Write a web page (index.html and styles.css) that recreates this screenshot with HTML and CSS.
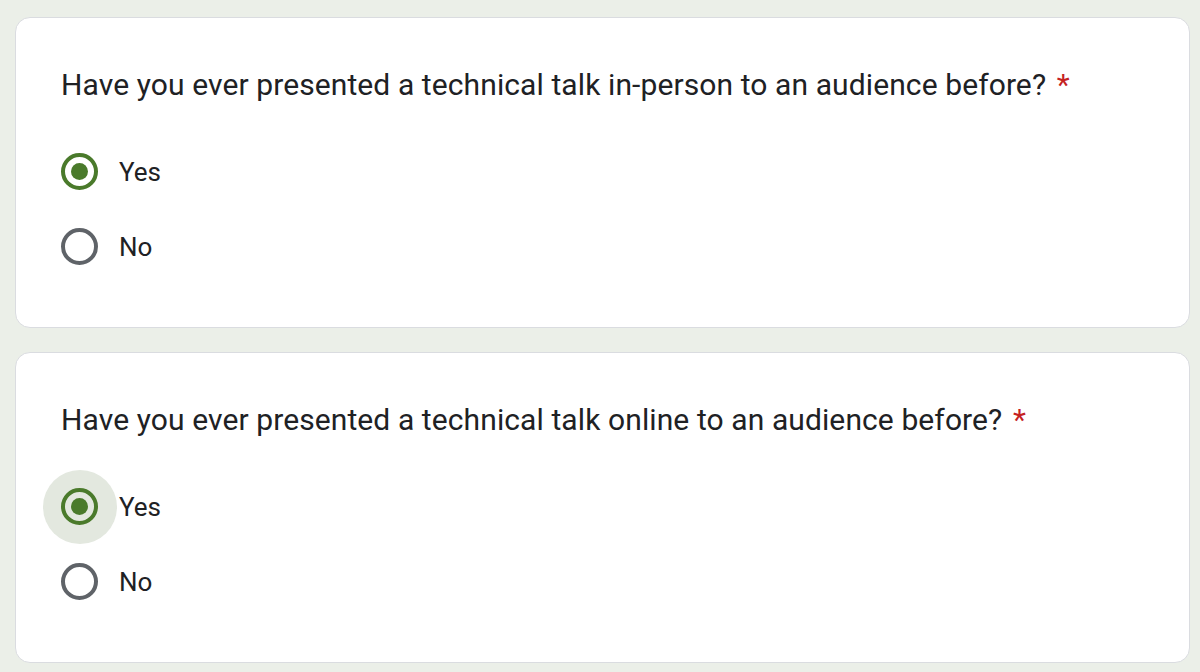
FILE: index.html
```html
<!DOCTYPE html>
<html lang="en">
<head>
<meta charset="utf-8">
<title>Form</title>
<link rel="stylesheet" href="styles.css">
</head>
<body>
<main class="form">
  <section class="card">
    <h2 class="question">Have you ever presented a technical talk in-person to an audience before? <span class="req">*</span></h2>
    <div class="options">
      <div class="option"><span class="radio checked"></span><span class="label">Yes</span></div>
      <div class="option"><span class="radio"></span><span class="label">No</span></div>
    </div>
  </section>
  <section class="card">
    <h2 class="question">Have you ever presented a technical talk online to an audience before? <span class="req">*</span></h2>
    <div class="options">
      <div class="option"><span class="radio checked focused"></span><span class="label">Yes</span></div>
      <div class="option"><span class="radio"></span><span class="label">No</span></div>
    </div>
  </section>
</main>
</body>
</html>
```
FILE: styles.css
```css
* { box-sizing: border-box; }
html, body { margin: 0; }
body {
  background: #ebefe8;
  font-family: Roboto, "Noto Sans", sans-serif;
  color: #202124;
  width: 1200px;
  height: 672px;
  overflow: hidden;
}
.form {
  padding: 17px 10px 0 15px;
  display: flex;
  flex-direction: column;
  gap: 24px;
}
.card {
  background: #fff;
  border: 1px solid #dadce0;
  border-radius: 15px;
  height: 311px;
  padding: 47px 46px 0 45px;
}
.question {
  margin: 0;
  font-weight: 400;
  font-size: 30px;
  line-height: 40px;
  letter-spacing: 0.1px;
  color: #202124;
}
.req {
  color: #c5221f;
  margin-left: 3px;
}
.options {
  margin-top: 29px;
  display: flex;
  flex-direction: column;
}
.option {
  height: 75px;
  display: flex;
  align-items: center;
  gap: 21px;
  isolation: isolate;
}
.radio {
  position: relative;
  width: 37px;
  height: 37px;
  border-radius: 50%;
  border: 4px solid #5f6368;
  flex: none;
  display: flex;
  align-items: center;
  justify-content: center;
}
.radio.checked {
  border-color: #4a7a2b;
}
.radio.checked::after {
  content: "";
  width: 17px;
  height: 17px;
  border-radius: 50%;
  background: #4a7a2b;
}
.radio.focused::before {
  content: "";
  position: absolute;
  left: 50%;
  top: 50%;
  width: 74px;
  height: 74px;
  margin: -37px 0 0 -37px;
  border-radius: 50%;
  background: #e3e8df;
  z-index: -1;
}
.label {
  font-size: 26px;
  line-height: 32px;
  color: #202124;
}
```
